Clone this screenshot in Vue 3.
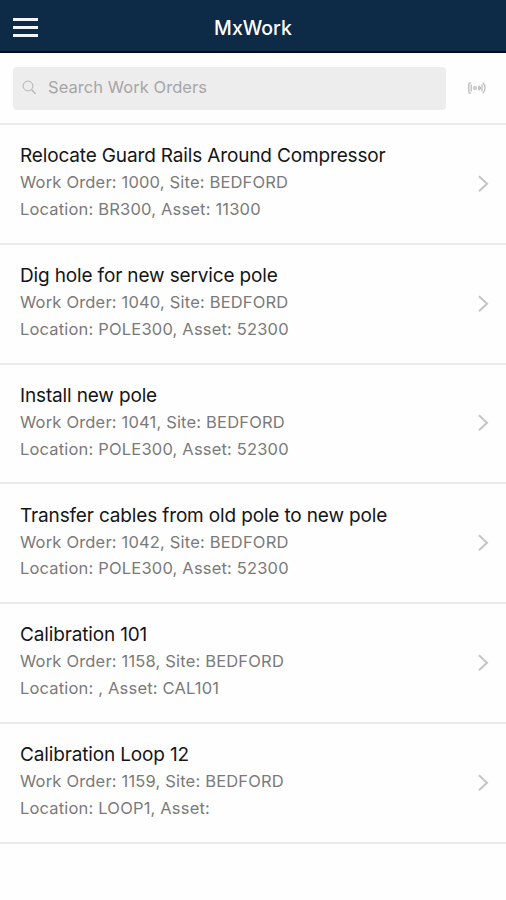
<template>
  <div class="page">
    <!-- Header -->
    <header class="nav-bar">
      <button class="menu-btn" aria-label="Menu">
        <span></span>
        <span></span>
        <span></span>
      </button>
      <h1>MxWork</h1>
    </header>

    <!-- Search -->
    <div class="search-row">
      <label class="search-box">
        <svg width="16" height="16" viewBox="0 0 16 16" fill="none" stroke="#b4b4b4" stroke-width="1">
          <circle cx="6" cy="6" r="4.9" />
          <path d="M9.6 9.7 L13.5 13.8" stroke-width="1.3" />
        </svg>
        <input v-model="keyword" type="text" placeholder="Search Work Orders" />
      </label>
      <button class="scan-btn" aria-label="Scan">
        <svg width="20" height="14" viewBox="0 0 20 14" fill="none" stroke="#bcbcbc" stroke-width="1.3">
          <path d="M4 1.8 H3 Q1.8 1.8 1.8 4 V10 Q1.8 12.2 3 12.2 H4" />
          <path d="M15.8 1.8 Q18 3.5 18 7 T15.8 12.2" />
          <path d="M4.2 3.5 V10.5 M12 4.5 V9.5 M15 3.5 V10.5" />
          <circle cx="8" cy="7" r="1.3" />
          <circle cx="12.8" cy="7" r="0.9" />
        </svg>
      </button>
    </div>

    <!-- Work order list -->
    <ul class="order-list">
      <li v-for="order in filteredOrders" :key="order.id" class="order-item">
        <div class="order-info">
          <h2>{{ order.title }}</h2>
          <p>Work Order: {{ order.id }}, Site: {{ order.site }}</p>
          <p>Location: {{ order.location }}, Asset: {{ order.asset }}</p>
        </div>
        <svg class="arrow" width="12" height="18" viewBox="0 0 12 18" fill="none" stroke="#c4c4c4" stroke-width="2">
          <path d="M2 1.2 L10 8.7 L2 16.2" />
        </svg>
      </li>
    </ul>
  </div>
</template>

<script setup>
import { ref, computed } from 'vue'

const keyword = ref('')

const orders = ref([
  { id: '1000', title: 'Relocate Guard Rails Around Compressor', site: 'BEDFORD', location: 'BR300', asset: '11300' },
  { id: '1040', title: 'Dig hole for new service pole', site: 'BEDFORD', location: 'POLE300', asset: '52300' },
  { id: '1041', title: 'Install new pole', site: 'BEDFORD', location: 'POLE300', asset: '52300' },
  { id: '1042', title: 'Transfer cables from old pole to new pole', site: 'BEDFORD', location: 'POLE300', asset: '52300' },
  { id: '1158', title: 'Calibration 101', site: 'BEDFORD', location: '', asset: 'CAL101' },
  { id: '1159', title: 'Calibration Loop 12', site: 'BEDFORD', location: 'LOOP1', asset: '' }
])

const filteredOrders = computed(() => {
  const text = keyword.value.trim().toLowerCase()
  return orders.value.filter((order) => order.title.toLowerCase().includes(text))
})
</script>

<style>
body {
  margin: 0;
  background: #fefefe;
}
</style>

<style scoped>
.page {
  min-height: 900px;
  background: #fefefe;
  font-family: Inter, 'Liberation Sans', sans-serif;
}

.nav-bar {
  display: grid;
  grid-template-columns: 50px 1fr 50px;
  align-items: center;
  box-sizing: border-box;
  height: 53px;
  background: #0d2a46;
  border-bottom: 2px solid #04082c;
}

.nav-bar h1 {
  margin: 4px 0 0;
  color: #ffffff;
  font-size: 19.5px;
  font-weight: 500;
  line-height: 24px;
  text-align: center;
}

button {
  padding: 0;
  border: none;
  background: none;
  cursor: pointer;
}

.menu-btn {
  display: flex;
  flex-direction: column;
  gap: 5px;
  width: 25px;
  margin: 3px 0 0 12.5px;
}

.menu-btn span {
  height: 3px;
  background: #f4f5fa;
}

.search-row {
  display: flex;
  align-items: center;
  box-sizing: border-box;
  height: 70px;
  padding: 0 13px;
}

.search-box {
  display: flex;
  align-items: center;
  gap: 10px;
  box-sizing: border-box;
  width: 433px;
  height: 43px;
  padding: 0 9px;
  border-radius: 4px;
  background: #ededed;
}

.search-box input {
  flex: 1;
  min-width: 0;
  padding: 0 0 2px;
  border: none;
  outline: none;
  background: transparent;
  color: #333333;
  font-family: inherit;
  font-size: 16.5px;
  letter-spacing: 0.05px;
  line-height: 24px;
}

.search-box input::placeholder {
  color: #a6a6a6;
  opacity: 1;
}

.scan-btn {
  display: flex;
  margin-left: 21px;
}

.order-list {
  margin: 0;
  padding: 0;
  border-top: 2px solid #eaeaea;
  list-style: none;
}

.order-item {
  display: flex;
  align-items: center;
  justify-content: space-between;
  box-sizing: border-box;
  height: 119.75px;
  padding: 0 17px 0 20px;
  border-bottom: 2px solid #eaeaea;
}

.order-info {
  padding-bottom: 2.4px;
}

.order-info h2 {
  margin: 0;
  color: #151515;
  font-size: 19px;
  font-weight: 400;
  letter-spacing: -0.15px;
  line-height: 27px;
}

.order-info p {
  margin: 0;
  color: #7a7a7a;
  font-size: 16.5px;
  letter-spacing: 0.18px;
  line-height: 26.7px;
}
</style>
